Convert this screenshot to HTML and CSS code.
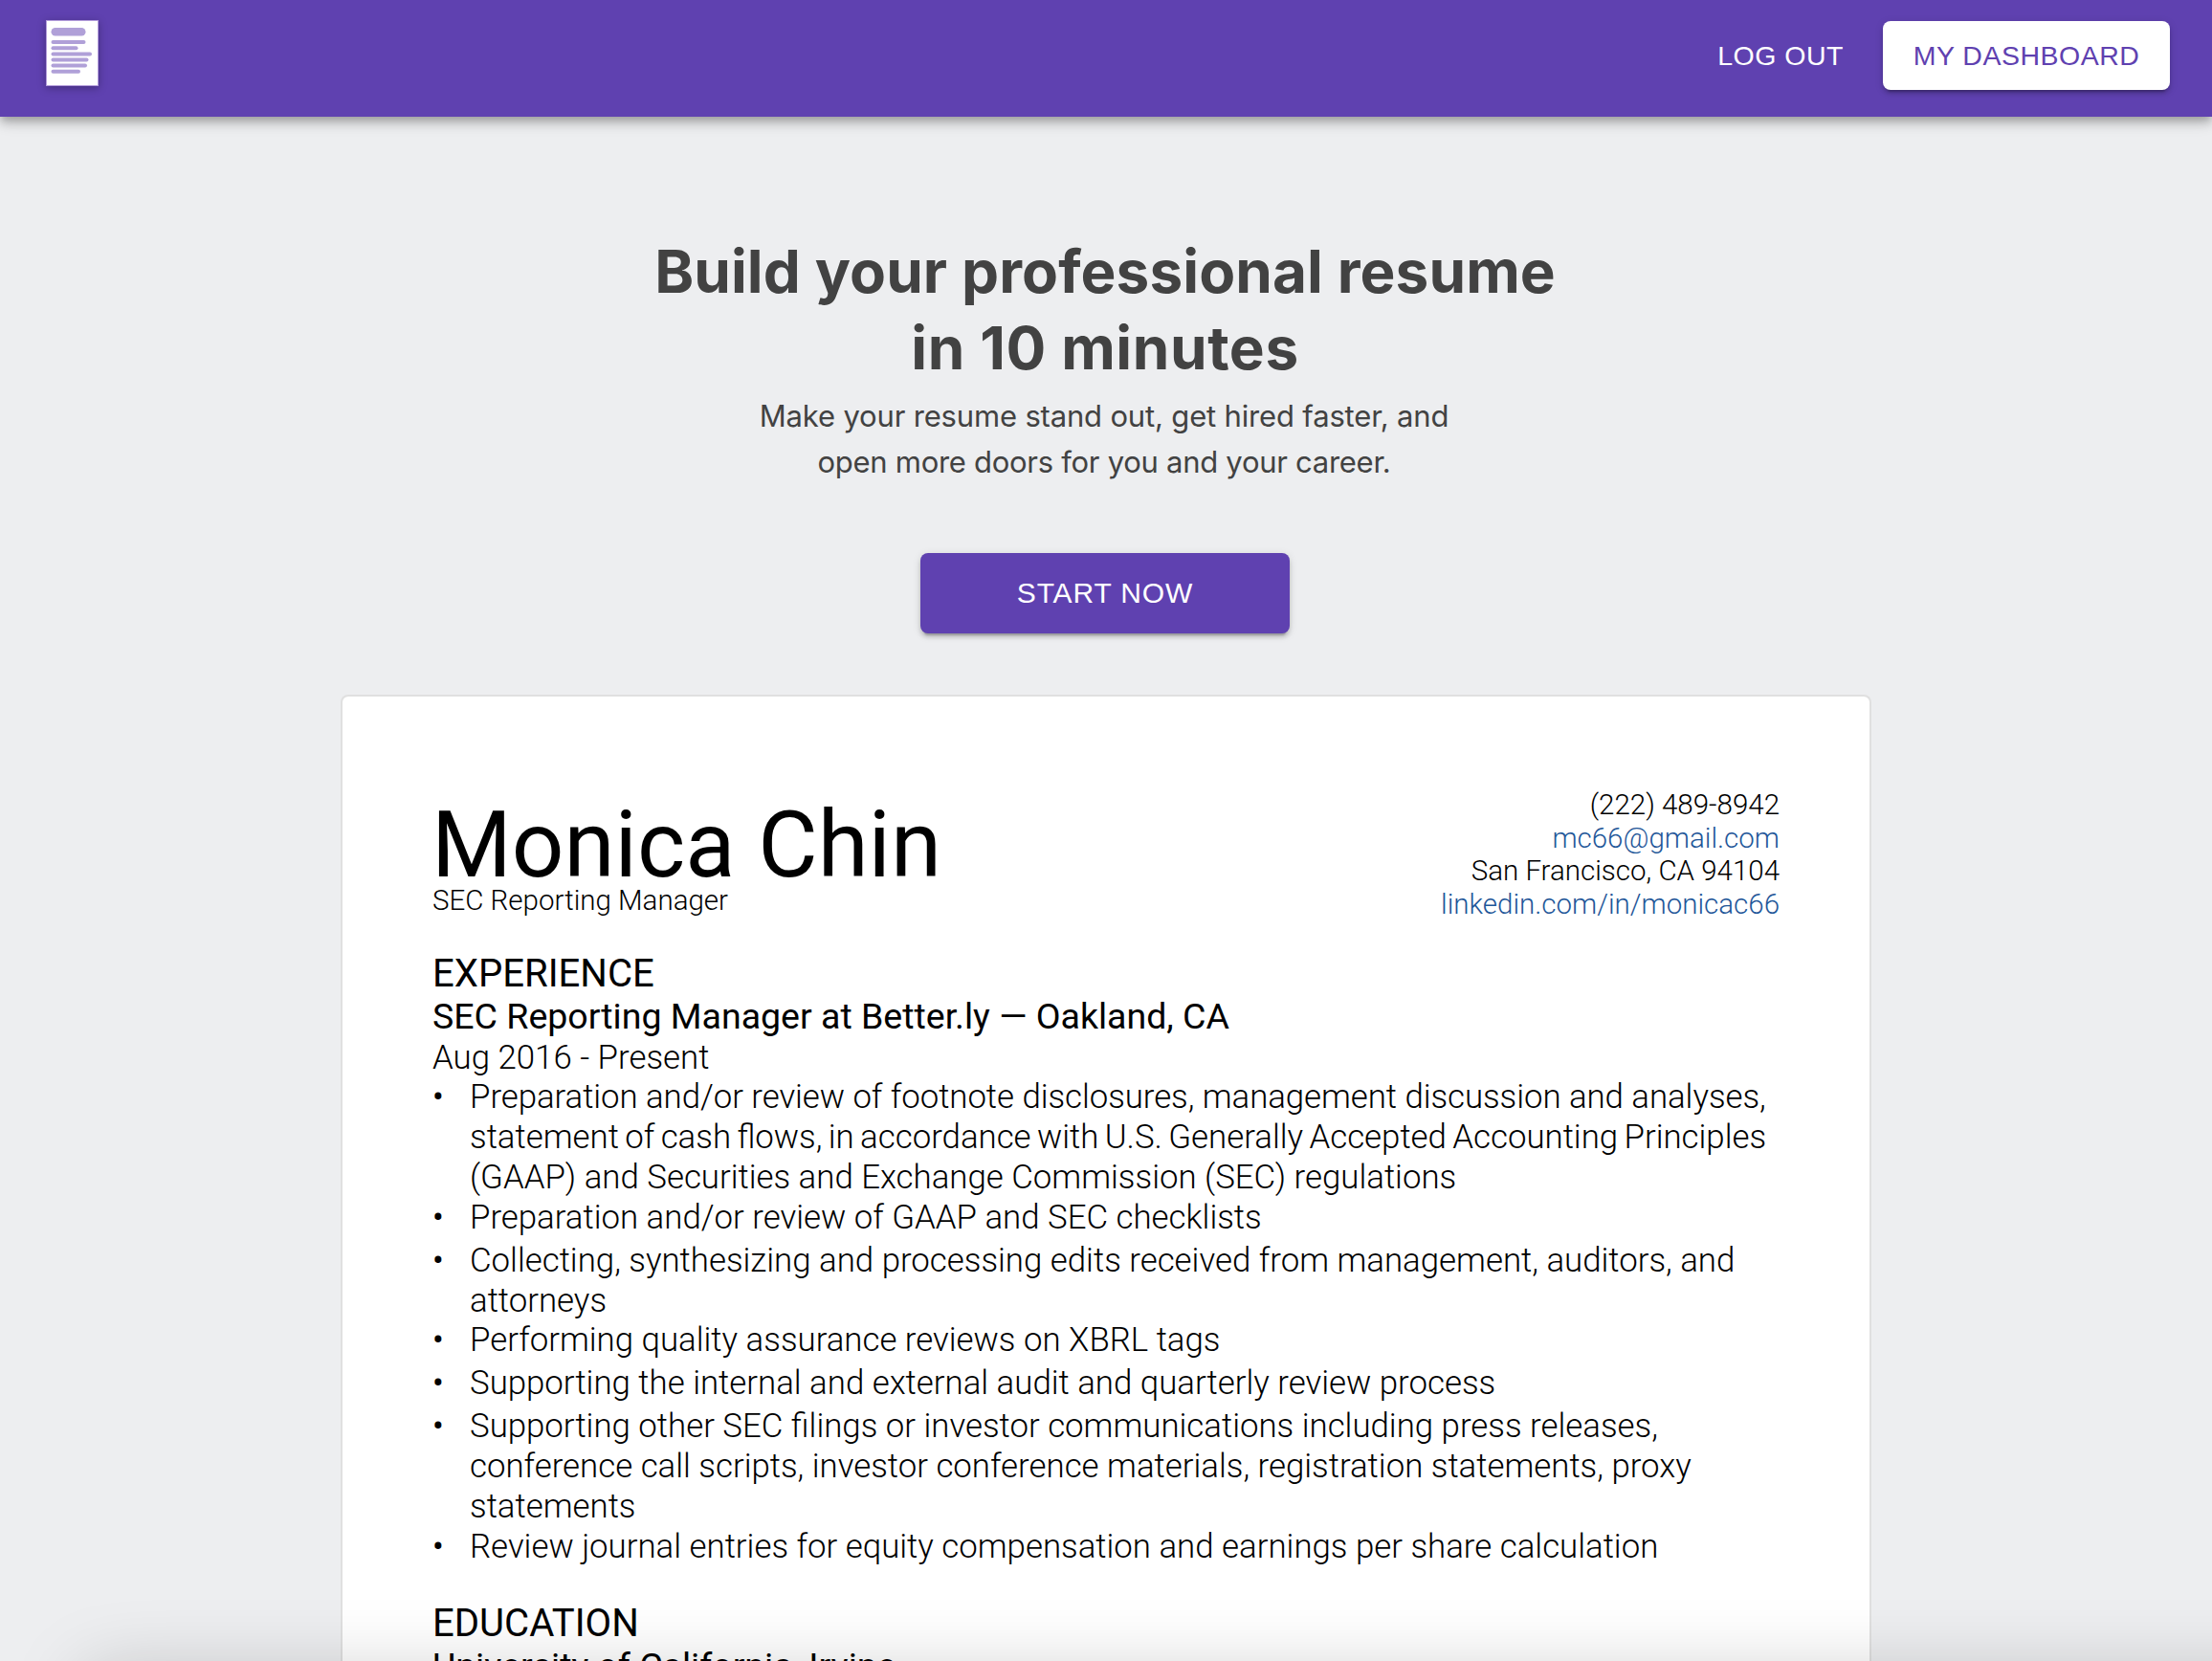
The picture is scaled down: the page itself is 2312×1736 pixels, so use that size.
FILE: index.html
```
<!DOCTYPE html>
<html lang="en">
<head>
<meta charset="utf-8">
<title>Resume Builder</title>
<link rel="stylesheet" href="styles.css">
</head>
<body>
<div class="page">
<header class="topbar">
  <svg class="logo" viewBox="0 0 55 69" width="55" height="69">
    <rect x=".5" y=".5" width="54" height="68" fill="#fff" stroke="#b39ddb"/>
    <g fill="#b0a0d8">
      <rect x="5.500" y="8" width="36" height="8.500" rx="4.250"/>
      <rect x="5.500" y="21" width="36" height="4" rx="2"/>
      <rect x="5.500" y="27.200" width="28" height="4" rx="2"/>
      <rect x="5.500" y="33.400" width="42.500" height="4" rx="2"/>
      <rect x="5.500" y="39.500" width="39" height="4" rx="2"/>
      <rect x="5.500" y="45.600" width="37.500" height="4" rx="2"/>
      <rect x="5.500" y="51.700" width="30.500" height="4" rx="2"/>
    </g>
  </svg>
  <nav class="nav">
    <a class="nav-link">LOG OUT</a>
    <a class="nav-button">MY DASHBOARD</a>
  </nav>
</header>
<main class="content">
  <section class="hero">
    <h1 class="hero-title">Build your professional resume<br><span class="hero-title-end">in 10 minutes</span></h1>
    <p class="hero-text">Make your resume stand out, get hired faster, and<br><span class="hero-text-end">open more doors for you and your career.</span></p>
    <a class="start">START NOW</a>
  </section>
  <article class="resume">
    <div class="resume-head">
      <div class="identity">
        <h2 class="name">Monica Chin</h2>
        <p class="role">SEC Reporting Manager</p>
      </div>
      <div class="contact">
        <p>(222) 489-8942</p>
        <p class="link">mc66@gmail.com</p>
        <p>San Francisco, CA 94104</p>
        <p class="link">linkedin.com/in/monicac66</p>
      </div>
    </div>
    <h3 class="section-title">EXPERIENCE</h3>
    <h4 class="job">SEC Reporting Manager at Better.ly — Oakland, CA</h4>
    <p class="dates">Aug 2016 - Present</p>
    <ul class="duties">
      <li><span class="snug">Preparation and/or review of footnote disclosures, management discussion and analyses,</span><br><span class="tight">statement of cash flows, in accordance with U.S. Generally Accepted Accounting Principles</span><br>(GAAP) and Securities and Exchange Commission (SEC) regulations</li>
      <li class="spaced">Preparation and/or review of GAAP and SEC checklists</li>
      <li>Collecting, synthesizing and processing edits received from management, auditors, and<br>attorneys</li>
      <li class="spaced">Performing quality assurance reviews on XBRL tags</li>
      <li class="spaced">Supporting the internal and external audit and quarterly review process</li>
      <li>Supporting other SEC filings or investor communications including press releases,<br>conference call scripts, investor conference materials, registration statements, proxy<br>statements</li>
      <li>Review journal entries for equity compensation and earnings per share calculation</li>
    </ul>
    <h3 class="section-title">EDUCATION</h3>
    <h4 class="job">University of California, Irvine</h4>
  </article>
</main>
<div class="page-shade"></div>
</div>
</body>
</html>
```
FILE: styles.css
```
* { box-sizing: border-box; }
body { margin: 0; }
h1, h2, h3, h4, p, ul { margin: 0; padding: 0; font-weight: 400; white-space: nowrap; }

.page {
  position: relative;
  display: flex;
  flex-direction: column;
  height: 100vh;
  overflow: hidden;
  background: #edeef0;
  color: #424242;
  font-family: Inter, sans-serif;
}

/* Top bar */
.topbar {
  position: relative;
  display: flex;
  flex: none;
  justify-content: space-between;
  align-items: flex-start;
  height: 122px;
  padding: 21px 44px 0 48px;
  background: #5f41b0;
  box-shadow: 0 4px 8px -2px rgba(0,0,0,.2), 0 8px 10px rgba(0,0,0,.14), 0 2px 20px rgba(0,0,0,.12);
}
.logo { filter: drop-shadow(0 2px 4px rgba(0,0,0,.3)); }
.nav {
  display: flex;
  align-items: center;
  gap: 41px;
  padding-top: 1px;
  color: #fff;
  font: 28.5px/72px "Liberation Sans", sans-serif;
  letter-spacing: .5px;
}
.nav-button {
  width: 300px;
  height: 72px;
  border-radius: 8px;
  background: #fff;
  color: #5f41b0;
  text-align: center;
}
.nav-button, .start {
  box-shadow: 0 6px 2px -4px rgba(0,0,0,.2), 0 4px 4px rgba(0,0,0,.14), 0 2px 10px rgba(0,0,0,.12);
}

/* Hero */
.content { display: flex; flex: 1; flex-direction: column; align-items: center; min-height: 0; }
.hero {
  display: flex;
  flex: none;
  flex-direction: column;
  align-items: center;
  padding: 122px 2px 64px 0;
  text-align: center;
}
.hero-title { font-weight: 700; font-size: 62px; line-height: 80px; letter-spacing: .1px; }
.hero-title-end { letter-spacing: .6px; }
.hero-text { margin: 7px 2px 0 0; font-size: 31px; line-height: 48px; letter-spacing: -.17px; }
.hero-text-end { letter-spacing: -.28px; }
.start {
  width: 386px;
  height: 84px;
  margin-top: 71px;
  border-radius: 8px;
  background: #5f41b0;
  color: #fff;
  font: 30px/83px "Liberation Sans", sans-serif;
  letter-spacing: .86px;
}

/* Resume sheet */
.resume {
  flex: 1;
  width: 1600px;
  min-height: 0;
  padding: 95px 94px 0;
  border: 2px solid #e0e0e0;
  border-bottom: 0;
  border-radius: 8px 8px 0 0;
  overflow: hidden;
  background: #fff;
  color: #000;
  font-family: Roboto, sans-serif;
}
.resume-head { display: flex; justify-content: space-between; margin-bottom: 32px; }
.identity { padding-top: 19px; }
.name { margin-left: -1px; font-size: 96px; line-height: 82px; }
.role { font-size: 29.5px; line-height: 34px; font-weight: 300; }
.contact { padding-top: 1px; font-size: 29.5px; line-height: 34.5px; text-align: right; }
.contact p, .dates { font-weight: 300; }
.link { color: #1f5799; }
.section-title { font-size: 40.1px; line-height: 47px; }
.job { font-size: 37.5px; line-height: 43px; }
.dates { font-size: 34.8px; line-height: 42px; }
.duties {
  margin: 0 0 35px;
  padding-left: 39px;
  font-size: 34.8px;
  font-weight: 300;
  line-height: 41.9px;
  list-style: none;
}
.duties li::before { content: "•"; display: inline-block; width: 39px; margin-left: -39px; font-weight: 400; }
.spaced { margin-bottom: 3px; }
.snug { letter-spacing: -.05px; }
.tight { word-spacing: -2.1px; }

/* Soft shade rising from the bottom edge */
.page-shade {
  position: absolute;
  left: 90px;
  right: -100px;
  top: 1752px;
  height: 200px;
  box-shadow: 0 0 80px rgba(0,0,0,.22);
  pointer-events: none;
}
```
